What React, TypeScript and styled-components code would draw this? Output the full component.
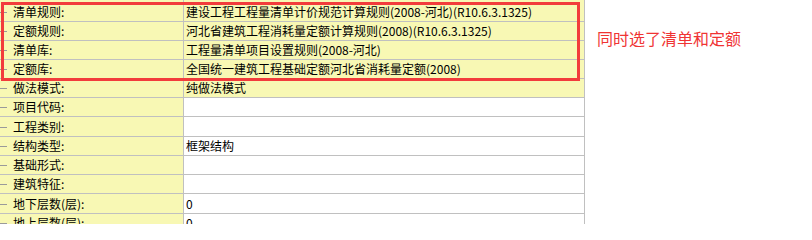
import React from 'react';
import styled, { createGlobalStyle } from 'styled-components';

interface Field {
    label: string;
    value: string;
    picked?: boolean;
    tall?: boolean;
}

const fields: Field[] = [
    { label: '清单规则:', value: '建设工程工程量清单计价规范计算规则(2008-河北)(R10.6.3.1325)', picked: true },
    { label: '定额规则:', value: '河北省建筑工程消耗量定额计算规则(2008)(R10.6.3.1325)', picked: true },
    { label: '清单库:', value: '工程量清单项目设置规则(2008-河北)', picked: true },
    { label: '定额库:', value: '全国统一建筑工程基础定额河北省消耗量定额(2008)', picked: true },
    { label: '做法模式:', value: '纯做法模式', picked: true },
    { label: '项目代码:', value: '' },
    { label: '工程类别:', value: '', tall: true },
    { label: '结构类型:', value: '框架结构' },
    { label: '基础形式:', value: '' },
    { label: '建筑特征:', value: '' },
    { label: '地下层数(层):', value: '0', tall: true },
    { label: '地上层数(层):', value: '0' },
];

const GlobalStyle = createGlobalStyle`
    html, body {
        margin: 0;
        padding: 0;
        background: #ffffff;
        overflow: hidden;
    }
    body {
        font-family: "Noto Sans CJK SC", "DejaVu Sans", sans-serif;
        font-size: 12px;
        color: #000000;
    }
`;

const Page = styled.div`
    display: flex;
    align-items: flex-start;
    width: 812px;
    height: 224px;
    overflow: hidden;
`;

const Sheet = styled.div`
    position: relative;
    display: flex;
    flex-direction: column;
    width: 585px;
    flex: none;
`;

const Row = styled.div<{ $stub?: boolean; $tall?: boolean }>`
    display: flex;
    height: ${(p) => (p.$stub ? '3px' : p.$tall ? '20px' : '19px')};
    box-sizing: border-box;
    border-bottom: ${(p) => (p.$stub ? 'none' : '1px solid #c0c0c0')};
`;

const LabelCell = styled.div`
    position: relative;
    display: flex;
    align-items: center;
    width: 184px;
    box-sizing: border-box;
    padding-left: 13px;
    background: #f8f8b4;
    border-right: 1px solid #c0c0c0;
    white-space: nowrap;
    line-height: 18px;
`;

const Tick = styled.span`
    position: absolute;
    left: 0;
    top: 50%;
    width: 7px;
    height: 1px;
    background: #9a9a9a;
`;

const ValueCell = styled.div<{ $picked?: boolean }>`
    display: flex;
    align-items: center;
    width: 401px;
    box-sizing: border-box;
    padding-left: 2px;
    background: ${(p) => (p.$picked ? '#f8f8b4' : '#ffffff')};
    border-right: 1px solid #c0c0c0;
    white-space: nowrap;
    overflow: hidden;
    line-height: 18px;
`;

const Highlight = styled.div`
    position: absolute;
    left: 1px;
    top: 2px;
    width: 579px;
    height: 79px;
    box-sizing: border-box;
    border: 3px solid #f23c3c;
    pointer-events: none;
`;

const Note = styled.div`
    padding: 28px 0 0 12px;
    font-size: 16px;
    line-height: 20px;
    color: #f03434;
    white-space: nowrap;
`;

export default function App() {
    return (
        <>
            <GlobalStyle />
            <Page>
                <Sheet>
                    <Row $stub>
                        <LabelCell />
                        <ValueCell $picked />
                    </Row>
                    {fields.map((f) => (
                        <Row key={f.label} $tall={f.tall}>
                            <LabelCell>
                                <Tick />
                                {f.label}
                            </LabelCell>
                            <ValueCell $picked={f.picked}>{f.value}</ValueCell>
                        </Row>
                    ))}
                    <Highlight />
                </Sheet>
                <Note>同时选了清单和定额</Note>
            </Page>
        </>
    );
}
